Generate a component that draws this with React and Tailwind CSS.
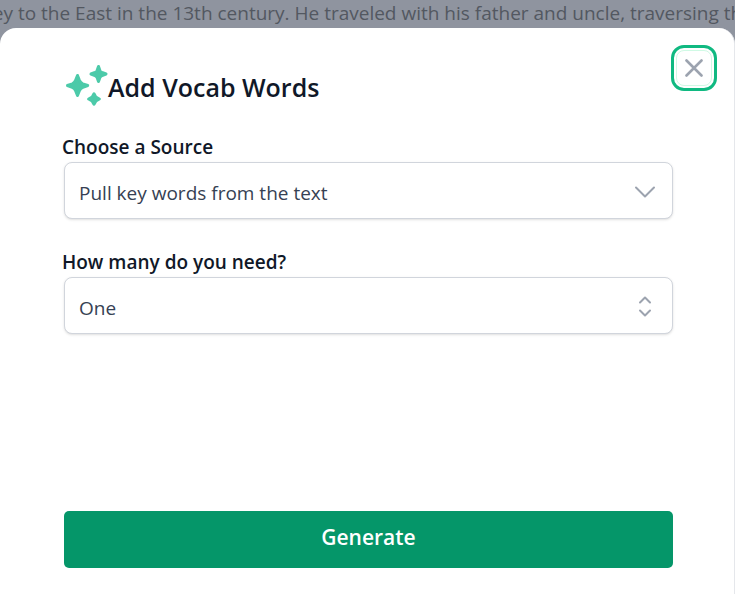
function Sparkles() {
  return (
    <svg viewBox="0 0 44 44" className="h-11 w-11 shrink-0" fill="#4ccaa9" stroke="#4ccaa9" strokeWidth="3" strokeLinejoin="round" aria-hidden="true">
      <path d="M13.5 13.5 L15.4 18.4 Q16.4 20.8 18.8 21.8 L23.7 23.5 L18.8 25.4 Q16.4 26.3 15.4 28.7 L13.5 33.5 L11.6 28.7 Q10.7 26.3 8.3 25.4 L3.5 23.5 L8.3 21.8 Q10.7 20.8 11.6 18.4 Z" />
      <path d="M34.5 4.5 L35.9 8.6 Q36.6 9.9 38 10.5 L42 12 L38 13.6 Q36.6 14.2 35.9 15.5 L34.5 19.5 L33.1 15.5 Q32.4 14.2 31 13.6 L27 12 L31 10.5 Q32.4 9.9 33.1 8.6 Z" />
      <path d="M30 31.8 L31.9 35.2 L35.3 37 L31.9 38.9 L30 42.2 L28.1 38.9 L24.7 37 L28.1 35.2 Z" />
    </svg>
  );
}

function Field({ id, label, options, children }) {
  return (
    <div>
      <label htmlFor={id} className="-ml-0.5 block pt-0.5 text-[19px] leading-[30px] font-semibold text-gray-900">
        {label}
      </label>
      <div className="relative">
        <select
          id={id}
          className="block h-[57px] w-full appearance-none rounded-lg border border-gray-300 bg-white pt-1.5 pr-14 pl-3.5 text-[19px] text-gray-700 shadow-sm outline-none"
        >
          {options.map((option) => (
            <option key={option}>{option}</option>
          ))}
        </select>
        <svg
          viewBox="0 0 24 24"
          className="pointer-events-none absolute top-[17px] right-4 h-6 w-6"
          fill="none"
          stroke="#9ca3af"
          strokeWidth="2"
          strokeLinecap="round"
          strokeLinejoin="round"
          aria-hidden="true"
        >
          {children}
        </svg>
      </div>
    </div>
  );
}

export default function App() {
  return (
    <div className="flex min-h-screen flex-col bg-[#8f949f] font-['Open_Sans','Noto_Sans',sans-serif]">
      <div className="flex h-7 justify-center overflow-hidden">
        <p className="shrink-0 text-[19px] leading-[26px] whitespace-nowrap text-[#535861]">
          ey to the East in the 13th century. He traveled with his father and uncle, traversing th
        </p>
      </div>
      <main role="dialog" aria-labelledby="title" className="flex grow flex-col rounded-t-2xl border-r border-gray-200 bg-white pr-[61px] pb-[26px] pl-16">
        <header className="-mr-11 flex items-start justify-between pt-[17px]">
          <div className="flex items-center pt-[17px]">
            <Sparkles />
            <h1 id="title" className="pt-1.5 text-[25px] leading-8 font-semibold text-gray-900">
              Add Vocab Words
            </h1>
          </div>
          <button type="button" aria-label="Close" className="flex h-[46px] w-[46px] items-center justify-center rounded-[13px] border-3 border-[#10b981] bg-white p-[2px]">
            <span className="flex h-full w-full items-center justify-center rounded-lg border border-emerald-100">
              <svg viewBox="0 0 18 18" className="h-[18px] w-[18px]" fill="none" stroke="#9ca3af" strokeWidth="2.6" strokeLinecap="round" aria-hidden="true">
                <path d="M1.5 1.5l15 15M16.5 1.5l-15 15" />
              </svg>
            </span>
          </button>
        </header>
        <form className="flex grow flex-col gap-[26px] pt-6" onSubmit={(event) => event.preventDefault()}>
          <Field id="source" label="Choose a Source" options={["Pull key words from the text"]}>
            <path d="M3 8.5l9 9 9-9" />
          </Field>
          <Field id="count" label="How many do you need?" options={["One", "Two", "Three"]}>
            <path d="M7 8.5l5-5 5 5M7 16.5l5 5 5-5" />
          </Field>
          <button type="submit" className="mt-auto h-[57px] rounded-[5px] bg-[#059669] pb-1 text-[21px] font-semibold text-white">
            Generate
          </button>
        </form>
      </main>
    </div>
  );
}
